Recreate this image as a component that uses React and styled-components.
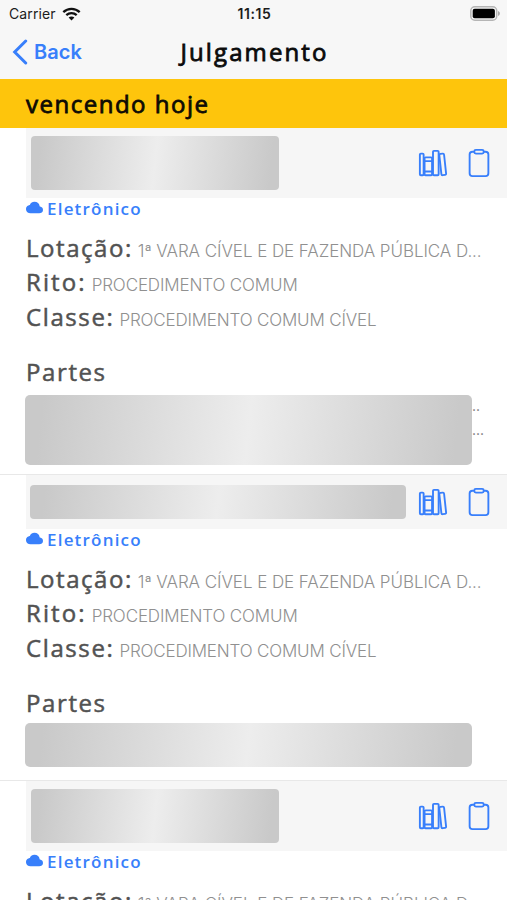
import React from 'react';
import styled, { createGlobalStyle } from 'styled-components';
import { IoLibraryOutline, IoClipboardOutline, IoCloud } from 'react-icons/io5';

const GlobalStyle = createGlobalStyle`
  *, *::before, *::after { box-sizing: border-box; }
  body { margin: 0; background: #fff; }
`;

const display = '"Open Sans", "Noto Sans", sans-serif';
const system = 'Inter, "Liberation Sans", sans-serif';
const blue = '#387ffb';

const Screen = styled.main`
  width: 507px;
  height: 900px;
  overflow: hidden;
  background: #fff;
  font-family: ${system};
`;

const StatusBar = styled.div`
  display: grid;
  grid-template-columns: 1fr auto 1fr;
  align-items: center;
  height: 27px;
  padding: 0 7px 0 9px;
  background: #f7f7f7;
  color: #1c1c1c;
`;

const Carrier = styled.span`
  display: flex;
  align-items: center;
  gap: 6px;
  font-size: 14px;
  line-height: 27px;
  letter-spacing: 0.1px;
`;

const Clock = styled.span`
  font-size: 14px;
  font-weight: 600;
  letter-spacing: 0.6px;
`;

const BatterySlot = styled.span`
  display: flex;
  justify-content: flex-end;
`;

const NavBar = styled.header`
  display: grid;
  grid-template-columns: 1fr auto 1fr;
  align-items: center;
  height: 52px;
  padding: 0 12px 2px;
  background: #f7f7f7;
`;

const BackButton = styled.button`
  display: flex;
  align-items: center;
  gap: 6px;
  padding: 0;
  border: 0;
  background: none;
  color: ${blue};
  font: 600 20px/26px ${system};
  letter-spacing: 0.1px;
`;

const Title = styled.h1`
  margin: 0;
  padding-left: 2px;
  color: #0b0b0b;
  font: 400 24px/34px ${display};
  letter-spacing: 2.1px;
  -webkit-text-stroke: 0.8px currentColor;
`;

const Banner = styled.h2`
  display: flex;
  align-items: center;
  height: 49px;
  margin: 0;
  padding-left: 26px;
  background: #fec50c;
  color: #0d0b04;
  font: 400 24px/34px ${display};
  letter-spacing: 1.5px;
  -webkit-text-stroke: 0.8px currentColor;
`;

const Case = styled.article`
  height: ${(p) => p.$height}px;
  padding-left: 26px;
  border-bottom: 1px solid #e8e8e8;
`;

const CaseHeader = styled.div`
  display: flex;
  align-items: center;
  justify-content: space-between;
  height: ${(p) => p.$height}px;
  padding: 0 13px 0 ${(p) => p.$inset}px;
  background: #f6f6f6;
`;

const Redacted = styled.div`
  flex: none;
  width: ${(p) => p.$width}px;
  height: ${(p) => p.$height}px;
  border-radius: ${(p) => p.$radius || 4}px;
  background: linear-gradient(96deg, #c9c9c9 4%, #ededed 50%, #c9c9c9 96%);
`;

const Actions = styled.div`
  display: flex;
  gap: 16px;
  color: ${blue};
`;

const Medium = styled.div`
  display: flex;
  align-items: center;
  gap: 4px;
  height: 24px;
  padding-bottom: 2px;
  color: ${blue};
  font: 600 17px/22px ${display};
  letter-spacing: 1.2px;

  svg { margin-top: -3px; }
`;

const Fields = styled.dl`
  margin: 9px 0 0;
`;

const Field = styled.div`
  display: flex;
  align-items: baseline;
  gap: 5px;
  height: 34.3px;
  line-height: 34px;
  white-space: nowrap;
`;

const Label = styled.dt`
  color: #525252;
  font: 400 24px/34px ${display};
  letter-spacing: ${(p) => p.$spacing}px;
  -webkit-text-stroke: 0.5px currentColor;
`;

const Value = styled.dd`
  margin: 0;
  color: #909090;
  font-size: 17px;
  font-weight: 300;
  letter-spacing: ${(p) => p.$spacing}px;
`;

const PartiesTitle = styled.h3`
  margin: 21px 0 ${(p) => p.$gap}px;
  color: #525252;
  font: 400 24px/34px ${display};
  letter-spacing: 1.6px;
  -webkit-text-stroke: 0.5px currentColor;
`;

const Parties = styled.div`
  display: flex;
  margin-left: -1px;
`;

const Overflow = styled.div`
  color: #777;
  font-size: 14px;
  font-weight: 400;
  line-height: 24px;
  margin-top: -1px;
`;

const Wifi = () => (
  <svg width="19" height="14" viewBox="0 0 19 14" fill="none" stroke="#111" strokeWidth="2.3">
    <path d="M1.3 5.1C6 .7 13 .7 17.7 5.1" />
    <path d="M4.3 8.2c3-2.7 7.4-2.7 10.4 0" />
    <path d="M9.5 13.6 6.6 10.5c1.6-1.5 4.2-1.5 5.8 0Z" fill="#111" stroke="none" />
  </svg>
);

const Battery = () => (
  <svg width="30" height="15" viewBox="0 0 30 15">
    <rect x=".8" y=".8" width="25.9" height="13.4" rx="4" fill="#f7f7f7" stroke="#b5b5b5" strokeWidth="1.5" />
    <rect x="2.7" y="2.7" width="22.2" height="9.6" rx="2" fill="#000" />
    <path d="M28 5c2.5.8 2.5 4.2 0 5Z" fill="#aaa" />
  </svg>
);

const BackChevron = () => (
  <svg width="16" height="26" viewBox="0 0 16 26" fill="none" stroke={blue} strokeWidth="3" strokeLinecap="round">
    <path d="M13.7 2 2.7 13l11 11" />
  </svg>
);

const fields = [
  { label: 'Lotação:', value: '1ª VARA CÍVEL E DE FAZENDA PÚBLICA D...', labelSpacing: 1.55, valueSpacing: -0.06 },
  { label: 'Rito:', value: 'PROCEDIMENTO COMUM', labelSpacing: 2.1, valueSpacing: -0.13 },
  { label: 'Classe:', value: 'PROCEDIMENTO COMUM CÍVEL', labelSpacing: 1.6, valueSpacing: -0.17 },
];

const cases = [
  { height: 347, header: 70, inset: 5, id: [248, 54], parties: [447, 70], gap: 6, overflow: ['..', '...'] },
  { height: 306, header: 54, inset: 4, id: [376, 34], parties: [447, 44], gap: 3 },
  { height: 347, header: 70, inset: 5, id: [248, 54], parties: [447, 70], gap: 6 },
];

function CaseItem({ item }) {
  return (
    <Case $height={item.height}>
      <CaseHeader $height={item.header} $inset={item.inset}>
        <Redacted $width={item.id[0]} $height={item.id[1]} />
        <Actions>
          <IoLibraryOutline size={30} />
          <IoClipboardOutline size={30} />
        </Actions>
      </CaseHeader>
      <Medium>
        <IoCloud size={17} />
        Eletrônico
      </Medium>
      <Fields>
        {fields.map((f) => (
          <Field key={f.label}>
            <Label $spacing={f.labelSpacing}>{f.label}</Label>
            <Value $spacing={f.valueSpacing}>{f.value}</Value>
          </Field>
        ))}
      </Fields>
      <PartiesTitle $gap={item.gap}>Partes</PartiesTitle>
      <Parties>
        <Redacted $width={item.parties[0]} $height={item.parties[1]} $radius={5} />
        {item.overflow && (
          <Overflow>
            {item.overflow.map((dots) => (
              <div key={dots}>{dots}</div>
            ))}
          </Overflow>
        )}
      </Parties>
    </Case>
  );
}

export default function App() {
  return (
    <Screen>
      <GlobalStyle />
      <StatusBar>
        <Carrier>
          Carrier <Wifi />
        </Carrier>
        <Clock>11:15</Clock>
        <BatterySlot>
          <Battery />
        </BatterySlot>
      </StatusBar>
      <NavBar>
        <BackButton>
          <BackChevron />
          Back
        </BackButton>
        <Title>Julgamento</Title>
      </NavBar>
      <Banner>vencendo hoje</Banner>
      {cases.map((item, i) => (
        <CaseItem key={i} item={item} />
      ))}
    </Screen>
  );
}
